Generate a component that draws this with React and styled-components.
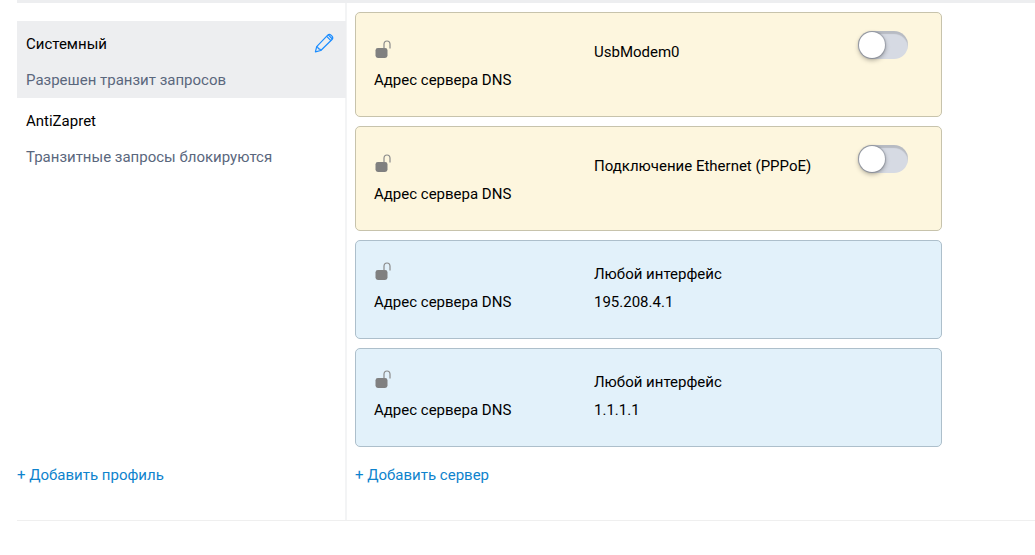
import React, { useState } from "react";
import styled, { createGlobalStyle } from "styled-components";

const GlobalStyle = createGlobalStyle`
  *, *::before { box-sizing: border-box; }
  body {
    margin: 0;
    background: #fff;
    color: #000;
    font: 15px/24px Roboto, "Liberation Sans", sans-serif;
  }
  button { font: inherit; border: 0; background: none; padding: 0; cursor: pointer; }
`;

const Page = styled.main`
  padding-left: 17px;
`;

const Panel = styled.div`
  display: grid;
  grid-template-columns: 330px minmax(0, 1fr);
  border-top: 3px solid #edeef0;
  border-bottom: 1px solid #efefef;
`;

const Sidebar = styled.aside`
  display: flex;
  flex-direction: column;
  justify-content: space-between;
  padding: 18px 0 33px;
  border-right: 2px solid #f3f4f5;
`;

const ProfileList = styled.ul`
  list-style: none;
  margin: 0 -1px 0 0;
  padding: 0;
`;

const Profile = styled.li`
  display: flex;
  align-items: flex-start;
  justify-content: space-between;
  padding: 11px 12px 6px 9px;
  background: ${({ $active }) => ($active ? "#edeef0" : "transparent")};
`;

const ProfileButton = styled.button`
  display: flex;
  flex: 1;
  flex-direction: column;
  gap: 12px;
  text-align: left;
  color: #000;
`;

const ProfileNote = styled.span`
  color: #5a677d;
`;

const EditButton = styled.button`
  display: flex;
  align-items: center;
  height: 22px;
`;

const AddButton = styled.button`
  align-self: flex-start;
  color: #0e83cd;
`;

const Servers = styled.section`
  display: flex;
  flex-direction: column;
  gap: 16px;
  padding: 9px 8px 33px;
`;

const CardList = styled.div`
  display: flex;
  flex-direction: column;
  gap: 9px;
  max-width: 587px;
`;

const Card = styled.article`
  display: flex;
  align-items: flex-start;
  padding: 18px 33px 22px 18px;
  border: 1px solid ${({ $auto }) => ($auto ? "#c7c3ac" : "#adbfcb")};
  border-radius: 5px;
  background: ${({ $auto }) => ($auto ? "#fdf6de" : "#e2f1fa")};
`;

const CardGrid = styled.div`
  display: grid;
  flex: 1;
  grid-template-columns: 220px 1fr;
  grid-auto-rows: 28px;
  align-items: center;
  padding-top: ${({ $auto }) => ($auto ? "7px" : "1px")};
`;

const Switch = styled.input.attrs({ type: "checkbox" })`
  appearance: none;
  flex: none;
  width: 50px;
  height: 28px;
  margin: 0;
  border-radius: 14px;
  background: ${({ checked }) => (checked ? "#0e83cd" : "#d6dae3")};
  box-shadow: inset 0 3px 1px rgba(0, 0, 0, 0.14);
  cursor: pointer;

  &::before {
    content: "";
    display: block;
    width: 26px;
    height: 26px;
    margin: 1px 0 0 ${({ checked }) => (checked ? "23px" : "1px")};
    border-radius: 50%;
    background: #fff;
    box-shadow: 0 0 1px 1px rgba(90, 95, 110, 0.35), 0 2px 5px rgba(0, 0, 0, 0.35);
  }
`;

const PencilIcon = () => (
  <svg width="20" height="20" viewBox="0 0 20 20" fill="none" stroke="#1a8cff" strokeWidth="1.2" strokeLinejoin="round" aria-hidden="true">
    <path d="M1.4 18.8 2.7 13.6 13.7 2.2Q15.3.6 17 2.2L18 3.2Q19.5 4.9 18 6.5L6.8 17.5Z" />
    <path d="M2.7 13.6Q4 13.7 4.4 15.6 6.4 16 6.8 17.5M12.7 3.3 16.9 7.6M14.3 1.9 18.3 6" />
  </svg>
);

const UnlockIcon = () => (
  <svg width="18" height="24" viewBox="0 0 18 24" role="img" aria-label="Открыто">
    <rect x="1.5" y="8" width="12" height="10" rx="2.4" fill="#808080" />
    <path d="M10 8.5V4.2Q10 1 13 1T16 4.2V8.5" fill="none" stroke="#8a8a8a" strokeWidth="1.2" />
  </svg>
);

const profiles = [
  { name: "Системный", note: "Разрешен транзит запросов" },
  { name: "AntiZapret", note: "Транзитные запросы блокируются" },
];

const servers = [
  { name: "UsbModem0", auto: true },
  { name: "Подключение Ethernet (PPPoE)", auto: true },
  { name: "Любой интерфейс", address: "195.208.4.1" },
  { name: "Любой интерфейс", address: "1.1.1.1" },
];

function ServerCard({ name, address, auto }) {
  const [enabled, setEnabled] = useState(false);
  return (
    <Card $auto={auto}>
      <CardGrid $auto={auto}>
        <UnlockIcon />
        <span>{name}</span>
        <span>Адрес сервера DNS</span>
        <span>{address}</span>
      </CardGrid>
      {auto && (
        <Switch aria-label={name} checked={enabled} onChange={(e) => setEnabled(e.target.checked)} />
      )}
    </Card>
  );
}

export default function App() {
  const [active, setActive] = useState(0);
  return (
    <Page>
      <GlobalStyle />
      <Panel>
        <Sidebar>
          <ProfileList>
            {profiles.map(({ name, note }, i) => (
              <Profile key={name} $active={i === active}>
                <ProfileButton type="button" onClick={() => setActive(i)}>
                  <span>{name}</span>
                  <ProfileNote>{note}</ProfileNote>
                </ProfileButton>
                {i === active && (
                  <EditButton type="button" aria-label="Изменить">
                    <PencilIcon />
                  </EditButton>
                )}
              </Profile>
            ))}
          </ProfileList>
          <AddButton type="button">+ Добавить профиль</AddButton>
        </Sidebar>
        <Servers>
          <CardList>
            {servers.map((server, i) => (
              <ServerCard key={i} {...server} />
            ))}
          </CardList>
          <AddButton type="button">+ Добавить сервер</AddButton>
        </Servers>
      </Panel>
    </Page>
  );
}
